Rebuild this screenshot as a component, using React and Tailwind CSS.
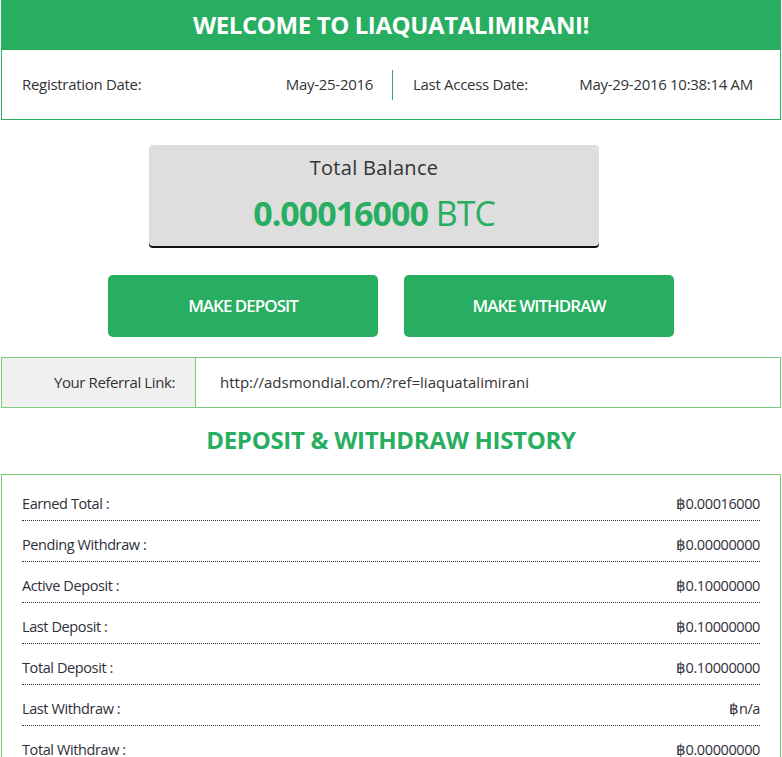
export default function App() {
  const rows = [
    ["Earned Total :", "฿0.00016000"],
    ["Pending Withdraw :", "฿0.00000000"],
    ["Active Deposit :", "฿0.10000000"],
    ["Last Deposit :", "฿0.10000000"],
    ["Total Deposit :", "฿0.10000000"],
    ["Last Withdraw :", "฿n/a"],
    ["Total Withdraw :", "฿0.00000000"],
  ];
  return (
    <div className="w-[782px] h-[757px] overflow-hidden bg-white text-[#333] font-['Open_Sans',sans-serif]">
      <div className="mx-px">
        <div className="h-[50px] bg-[#27ae60] flex items-center justify-center">
          <h1 className="text-white text-[24px] font-bold tracking-[-0.4px]">WELCOME TO LIAQUATALIMIRANI!</h1>
        </div>
        <div className="h-[70px] border border-t-0 border-[#27ae60] flex items-center text-[15px] tracking-[-0.3px]">
          <div className="w-[390px] flex items-center justify-between pl-[20px] pr-[19px]">
            <span>Registration Date:</span>
            <span>May-25-2016</span>
          </div>
          <div className="w-px h-[30px] bg-[#27ae60]" />
          <div className="flex-1 flex items-center justify-between pl-[20px] pr-[27px]">
            <span>Last Access Date:</span>
            <span>May-29-2016 10:38:14 AM</span>
          </div>
        </div>
      </div>

      <div className="flex mt-[25px] pl-[149px]">
        <div className="w-[450px] h-[101px] bg-[#dedede] rounded-[4px] shadow-[0_2px_0_#111] flex flex-col items-center pt-[10px]">
          <div className="text-[20px] text-[#333] leading-[26px] tracking-[0.3px]">Total Balance</div>
          <div className="text-[#27ae60] text-[34px] leading-[40px] mt-[12px] tracking-[-1px]">
            <span className="font-bold">0.00016000</span> <span>BTC</span>
          </div>
        </div>
      </div>

      <div className="flex justify-center gap-[26px] mt-[29px]">
        <button className="w-[270px] h-[62px] bg-[#27ae60] rounded-[5px] text-white text-[17px] font-semibold tracking-[-1px]">MAKE DEPOSIT</button>
        <button className="w-[270px] h-[62px] bg-[#27ae60] rounded-[5px] text-white text-[17px] font-semibold tracking-[-1px]">MAKE WITHDRAW</button>
      </div>

      <div className="mx-px mt-[20px] h-[51px] border border-[#7dc97d] flex text-[15px]">
        <div className="w-[194px] bg-[#f0f0f0] border-r border-[#7dc97d] flex items-center justify-end pr-[20px] tracking-[-0.4px]">Your Referral Link:</div>
        <div className="flex items-center pl-[24px]">http://adsmondial.com/?ref=liaquatalimirani</div>
      </div>

      <h2 className="text-center text-[#27ae60] text-[24px] font-bold mt-[17px] leading-[30px] tracking-[-0.3px]">DEPOSIT &amp; WITHDRAW HISTORY</h2>

      <div className="mx-px mt-[19px] border border-[#7dc97d] px-[20px] pt-[5px] pb-[10px] text-[14.5px] tracking-[-0.4px] text-[#2f2f3a]">
        {rows.map(([l, v]) => (
          <div key={l} className="h-[41px] flex items-end justify-between border-b border-dotted border-[#333] pb-[6px] leading-[20px]">
            <span>{l}</span>
            <span>{v}</span>
          </div>
        ))}
      </div>
    </div>
  );
}
